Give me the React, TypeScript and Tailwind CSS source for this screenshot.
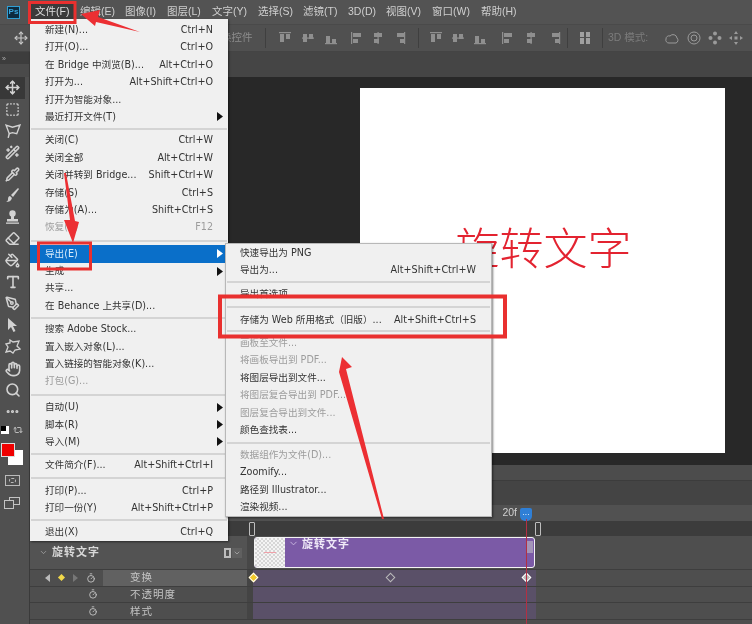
import React from 'react';
import { Move, SquareDashed, WandSparkles, Pipette, Eraser, PaintBucket, Type, PenTool, Hand, Search, Ellipsis, Repeat2, ChevronDown, Timer } from 'lucide-react';

const FONT = "font-['Liberation_Sans','Noto_Sans_CJK_SC',sans-serif]";
const MENUFONT = "font-['DejaVu_Sans','Noto_Sans_CJK_SC',sans-serif]";

type Row = { t: string; k?: string; off?: boolean; arrow?: boolean; hi?: boolean } | { sep: string };

const fileMenu: Row[] = [
  { t: '新建(N)...', k: 'Ctrl+N' },
  { t: '打开(O)...', k: 'Ctrl+O' },
  { t: '在 Bridge 中浏览(B)...', k: 'Alt+Ctrl+O' },
  { t: '打开为...', k: 'Alt+Shift+Ctrl+O' },
  { t: '打开为智能对象...' },
  { t: '最近打开文件(T)', arrow: true },
  { sep: 'my-[2px]' },
  { t: '关闭(C)', k: 'Ctrl+W' },
  { t: '关闭全部', k: 'Alt+Ctrl+W' },
  { t: '关闭并转到 Bridge...', k: 'Shift+Ctrl+W' },
  { t: '存储(S)', k: 'Ctrl+S' },
  { t: '存储为(A)...', k: 'Shift+Ctrl+S' },
  { t: '恢复(V)', k: 'F12', off: true },
  { sep: 'my-[3.5px]' },
  { t: '导出(E)', arrow: true, hi: true },
  { t: '生成', arrow: true },
  { t: '共享...' },
  { t: '在 Behance 上共享(D)...' },
  { sep: 'my-[2px]' },
  { t: '搜索 Adobe Stock...' },
  { t: '置入嵌入对象(L)...' },
  { t: '置入链接的智能对象(K)...' },
  { t: '打包(G)...', off: true },
  { sep: 'my-[3.2px]' },
  { t: '自动(U)', arrow: true },
  { t: '脚本(R)', arrow: true },
  { t: '导入(M)', arrow: true },
  { sep: 'my-[2px]' },
  { t: '文件简介(F)...', k: 'Alt+Shift+Ctrl+I' },
  { sep: 'my-[3px]' },
  { t: '打印(P)...', k: 'Ctrl+P' },
  { t: '打印一份(Y)', k: 'Alt+Shift+Ctrl+P' },
  { sep: 'my-[2.2px]' },
  { t: '退出(X)', k: 'Ctrl+Q' },
];

const exportMenu: Row[] = [
  { t: '快速导出为 PNG' },
  { t: '导出为...', k: 'Alt+Shift+Ctrl+W' },
  { sep: 'my-[2px]' },
  { t: '导出首选项...' },
  { sep: 'my-[3.2px]' },
  { t: '存储为 Web 所用格式（旧版）...', k: 'Alt+Shift+Ctrl+S' },
  { sep: 'my-[2px]' },
  { t: '画板至文件...', off: true },
  { t: '将画板导出到 PDF...', off: true },
  { t: '将图层导出到文件...' },
  { t: '将图层复合导出到 PDF...', off: true },
  { t: '图层复合导出到文件...', off: true },
  { t: '颜色查找表...' },
  { sep: 'my-[2.9px]' },
  { t: '数据组作为文件(D)...', off: true },
  { t: 'Zoomify...' },
  { t: '路径到 Illustrator...' },
  { t: '渲染视频...' },
];

function MenuRows({ rows, pl, pr }: { rows: Row[]; pl: string; pr: string }) {
  return (
    <>
      {rows.map((r, i) =>
        'sep' in r ? (
          <div key={i} className={`h-[2px] bg-[#d4d4d4] mx-[1px] ${r.sep}`} />
        ) : (
          <div
            key={i}
            className={`relative flex h-[17.4px] items-center justify-between whitespace-nowrap ${pl} ${pr} ${
              r.hi ? 'bg-[#0a6fc9] text-[#d8ecfa]' : r.off ? 'text-[#9c9c9c]' : 'text-[#333333]'
            }`}
          >
            <span>{r.t}</span>
            {r.k && <span>{r.k}</span>}
            {r.arrow && (
              <svg className="absolute right-[5px] top-[4px]" width="6" height="9" viewBox="0 0 6 9">
                <polygon points="0,0 6,4.5 0,9" fill={r.hi ? '#ffffff' : '#111111'} />
              </svg>
            )}
          </div>
        )
      )}
    </>
  );
}

const menuBar = [
  ['文件(F)', 'w-[44px] bg-[#3a3a3a] text-[#dddddd]'],
  ['编辑(E)', 'w-[45px] ml-[1px]'],
  ['图像(I)', 'w-[42px]'],
  ['图层(L)', 'w-[45px]'],
  ['文字(Y)', 'w-[46px]'],
  ['选择(S)', 'w-[45px]'],
  ['滤镜(T)', 'w-[45px]'],
  ['3D(D)', 'w-[38px]'],
  ['视图(V)', 'w-[46px]'],
  ['窗口(W)', 'w-[49px]'],
  ['帮助(H)', 'w-[46px]'],
];

function Bars({ v, flip }: { v?: boolean; flip?: number }) {
  const a = flip ?? 0;
  return (
    <svg width="14" height="14" viewBox="0 0 14 14" fill="#8f8f8f" className="shrink-0">
      {v ? (
        <>
          <rect x={a === 0 ? 1 : a === 1 ? 6.5 : 12} y="1" width="1.2" height="12" />
          <rect x={a === 2 ? 5 : 3} y="2" width="8" height="4" />
          <rect x={a === 2 ? 8 : 3} y="8" width="5" height="4" />
        </>
      ) : (
        <>
          <rect y={a === 0 ? 1 : a === 1 ? 6.5 : 12} x="1" height="1.2" width="12" />
          <rect y={a === 2 ? 5 : 3} x="2" height="8" width="4" />
          <rect y={a === 2 ? 8 : 3} x="8" height="5" width="4" />
        </>
      )}
    </svg>
  );
}

const Sep = ({ ml }: { ml: string }) => <div className={`h-[20px] w-px bg-[#3f3f3f] shrink-0 ${ml}`} />;

function OptionsBar() {
  return (
    <div className="flex h-[28px] shrink-0 items-center border-t border-b border-t-[#4a4a4a] border-b-[#444444] bg-[#505050] text-[10.5px] text-[#8c8c8c]">
      <Move size={14} className="ml-[14px] text-[#c8c8c8]" />
      <span className="ml-[193px] w-[30px] whitespace-nowrap">换控件</span>
      <Sep ml="ml-[14px]" />
      <div className="ml-[12px] flex gap-[9px]"><Bars flip={0} /><Bars flip={1} /><Bars flip={2} /></div>
      <div className="ml-[12px] flex gap-[7px]"><Bars v flip={0} /><Bars v flip={1} /><Bars v flip={2} /></div>
      <Sep ml="ml-[12px]" />
      <div className="ml-[10px] flex gap-[8px]"><Bars flip={0} /><Bars flip={1} /><Bars flip={2} /></div>
      <div className="ml-[14px] flex gap-[9px]"><Bars v flip={0} /><Bars v flip={1} /><Bars v flip={2} /></div>
      <Sep ml="ml-[6px]" />
      <svg width="12" height="12" viewBox="0 0 12 12" fill="#a0a0a0" className="ml-[11px]">
        <rect x="1" y="0" width="4" height="5" /><rect x="7" y="0" width="4" height="5" />
        <rect x="1" y="6" width="4" height="6" /><rect x="7" y="6" width="4" height="6" />
      </svg>
      <Sep ml="ml-[11px]" />
      <span className="ml-[5px] w-[44px] whitespace-nowrap text-[#7c7c7c]">3D 模式:</span>
      <div className="ml-[12px] flex items-center gap-[7px] text-[#9a9a9a]">
        <svg width="16" height="14" viewBox="0 0 16 14" fill="none" stroke="currentColor"><path d="M2 8a3 3 0 0 1 4-3 4 4 0 0 1 7 2 3 3 0 0 1-1 5H5a3 3 0 0 1-3-4z" /></svg>
        <svg width="14" height="14" viewBox="0 0 14 14" fill="none" stroke="currentColor"><circle cx="7" cy="7" r="6" /><circle cx="7" cy="7" r="3" /></svg>
        <svg width="14" height="14" viewBox="0 0 14 14" fill="currentColor"><circle cx="7" cy="2.5" r="2" /><circle cx="7" cy="11.5" r="2" /><circle cx="2.5" cy="7" r="2" /><circle cx="11.5" cy="7" r="2" /></svg>
        <svg width="14" height="14" viewBox="0 0 14 14" fill="currentColor"><path d="M7 0l2 3H5zM7 14l2-3H5zM0 7l3-2v4zM14 7l-3-2v4z" /><rect x="5.5" y="5.5" width="3" height="3" /></svg>
      </div>
    </div>
  );
}

const LassoIcon = () => (
  <svg width="16" height="16" viewBox="0 0 15 15" fill="none" stroke="currentColor" strokeWidth="1.3"><path d="M1 2l6 2 7-2-3 8-4-1-3 1z" /><path d="M4 10l-1 4" /></svg>
);
const ArrowIcon = () => (
  <svg width="15" height="15" viewBox="0 0 15 15" fill="currentColor"><path d="M3 0l9 8H8l2.5 5-2 1-2.5-5-3 3z" /></svg>
);
const BlobIcon = () => (
  <svg width="16" height="15" viewBox="0 0 16 15" fill="none" stroke="currentColor" strokeWidth="1.3"><path d="M5 1l3 2 6-1-2 5 3 3-5 1-2 3-3-2-4 1 2-5-2-3 4-1z" /></svg>
);
const BrushIcon = () => (
  <svg width="15" height="15" viewBox="0 0 15 15" fill="currentColor"><path d="M13 0l1 1-6 8-2-2z" /><path d="M5 8l2 2c-1 3-3 4-6 4 2-1 2-2 2-3 0-2 1-3 2-3z" /></svg>
);
const StampIcon = () => (
  <svg width="15" height="15" viewBox="0 0 15 15" fill="currentColor"><circle cx="7.5" cy="3.5" r="3.2" /><rect x="6" y="6" width="3" height="3" /><rect x="2" y="9" width="11" height="2.5" /><rect x="1" y="12.5" width="13" height="1.3" /></svg>
);

const tools: React.ReactNode[] = [
  <Move size={15} strokeWidth={2.4} />, <SquareDashed size={15} strokeWidth={2.2} />, <LassoIcon />, <WandSparkles size={15} strokeWidth={2.4} />, <Pipette size={15} strokeWidth={2.4} />,
  <BrushIcon />, <StampIcon />, <Eraser size={15} strokeWidth={2.4} />, <PaintBucket size={15} strokeWidth={2.4} />, <Type size={16} strokeWidth={2.4} />,
  <PenTool size={15} strokeWidth={2.4} />, <ArrowIcon />, <BlobIcon />, <Hand size={16} strokeWidth={2.4} />, <Search size={16} strokeWidth={2.4} />, <Ellipsis size={15} strokeWidth={3} />,
];

function Toolbar() {
  return (
    <div className="flex w-[30px] shrink-0 flex-col border-r border-r-[#3a3a3a] bg-[#505050] text-[#d2d2d2]">
      <div className="flex h-[12px] items-center bg-[#3d3d3d] pl-[2px] text-[7px] leading-none text-[#b0b0b0]">»</div>
      <div className="h-[13px] bg-[#4a4a4a]" />
      {tools.map((ic, i) => (
        <div key={i} className={`flex h-[21.6px] w-[25px] shrink-0 items-center justify-center ${i === 0 ? 'bg-[#383838]' : ''}`}>
          {ic}
        </div>
      ))}
      <div className="flex h-[15px] shrink-0 items-center justify-between pl-[1px] pr-[6px]">
        <div className="relative h-[8px] w-[8px] bg-white"><div className="h-[5px] w-[5px] bg-black" /></div>
        <Repeat2 size={10} />
      </div>
      <div className="relative mt-[5px] h-[23px] shrink-0">
        <div className="absolute left-[8px] top-[7px] h-[15px] w-[15px] bg-white" />
        <div className="absolute left-[1px] top-0 h-[14px] w-[14px] border border-[#dddddd] bg-[#f00000]" />
      </div>
      <div className="mt-[8px] flex h-[14px] shrink-0 items-center justify-center pr-[5px]">
        <div className="flex h-[11px] w-[15px] items-center justify-center border border-[#bbbbbb]"><div className="h-[5px] w-[7px] rounded-full border border-dashed border-[#bbbbbb]" /></div>
      </div>
      <div className="mt-[7px] flex h-[16px] shrink-0 items-center justify-center pr-[5px]">
        <svg width="16" height="12" viewBox="0 0 16 12" fill="none" stroke="#c4c4c4"><rect x="5.5" y="0.5" width="10" height="7" /><rect x="0.5" y="3.5" width="9" height="8" fill="#505050" /></svg>
      </div>
      <div className="flex-1 bg-[#505050]" />
    </div>
  );
}

function Diamond({ cls }: { cls: string }) {
  return <div className={`h-[7px] w-[7px] shrink-0 rotate-45 ${cls}`} />;
}

function TimelineRow({ label, active }: { label: string; active?: boolean }) {
  return (
    <div className="flex h-[16.6px] shrink-0 items-center border-b border-b-[#3e3e3e] text-[10.5px] text-[#c4c4c4]">
      <div className="flex h-full w-[73px] shrink-0 items-center">
        {active ? (
          <>
            <div className="ml-[15px] h-0 w-0 border-y-[4px] border-r-[5px] border-y-transparent border-r-[#bbbbbb]" />
            <div className="ml-[9px] h-[5px] w-[5px] rotate-45 bg-[#f2d94a]" />
            <div className="ml-[9px] h-0 w-0 border-y-[4px] border-l-[5px] border-y-transparent border-l-[#777777]" />
            <Timer size={10} className="ml-[8px] text-[#cccccc]" />
          </>
        ) : (
          <Timer size={10} className="ml-[58px] text-[#cccccc]" />
        )}
      </div>
      <div className={`flex h-full w-[144px] items-center pl-[27px] pt-[1px] tracking-[1px] ${active ? 'bg-[#616161]' : ''}`}>{label}</div>
      <div className="h-full w-[6px] bg-[#444444]" />
      <div className="relative flex h-full w-[283px] items-center bg-[#5a5068]">
        {active && (
          <div className="flex w-full items-center justify-between">
            <Diamond cls="-ml-[3px] border border-white bg-[#f2c92a]" />
            <Diamond cls="border border-[#bbbbbb]" />
            <Diamond cls="mr-[6px] border border-white bg-[#b9b9b9]" />
          </div>
        )}
      </div>
    </div>
  );
}

function Timeline() {
  return (
    <div className="flex min-h-0 flex-1 flex-col overflow-hidden bg-[#4e4e4e]">
      <div className="h-[15px] shrink-0 bg-[#4c4c4c]" />
      <div className="h-[25px] shrink-0 border-t border-t-[#3c3c3c] bg-[#444444]" />
      <div className="flex h-[16px] shrink-0 items-center justify-end bg-[#515151] pr-[220px] text-[10.5px] text-[#d0d0d0]">
        <span>20f</span>
        <div className="ml-[3px] mt-[3px] flex h-[13px] w-[12px] items-center justify-center rounded-b-[5px] rounded-t-[2px] bg-[#2f7fd6] text-[7px] leading-none text-white">···</div>
      </div>
      <div className="flex h-[15px] shrink-0 items-center bg-[#3c3c3c]">
        <div className="ml-[219px] h-[14px] w-[6px] rounded-[1px] border border-[#bdbdbd]" />
        <div className="ml-[280px] h-[14px] w-[6px] rounded-[1px] border border-[#bdbdbd]" />
      </div>
      <div className="flex h-[34px] shrink-0 items-center border-b border-b-[#3e3e3e]">
        <div className="flex h-full w-[217px] shrink-0 items-center bg-[#535353] pl-[9px] text-[11px] font-bold tracking-[1px] text-[#d8d8d8]">
          <ChevronDown size={9} className="text-[#a8a8a8]" />
          <span className="ml-[4px]">旋转文字</span>
          <div className="ml-auto mr-[5px] flex items-center">
            <div className="h-[10px] w-[7px] border-2 border-[#bdbdbd]" />
            <div className="ml-[1px] flex h-[10px] w-[10px] items-center justify-center bg-[#606060]"><ChevronDown size={8} className="text-[#bbbbbb]" /></div>
          </div>
        </div>
        <div className="h-full w-[7px] bg-[#474747]" />
        <div className="flex h-[31px] w-[281px] overflow-hidden rounded-[3px] border border-[#f4f4f4] bg-[#7b5aa6]">
          <div className="flex h-full w-[30px] shrink-0 items-center justify-center bg-[repeating-conic-gradient(#d6d6d6_0_25%,#f4f4f4_0_50%)] bg-[length:4px_4px]">
            <div className="h-px w-[12px] bg-[#f0a0a8]" />
          </div>
          <ChevronDown size={11} className="ml-[3px] text-[#c9b8e0]" />
          <span className="ml-[3px] -mt-[1px] h-[14px] text-[11px] font-bold leading-[14px] tracking-[1px] text-[#f0eaf8]">旋转文字</span>
          <div className="ml-auto mr-[1px] mt-[3px] h-[12px] w-[7px] bg-[#a395b8]" />
        </div>
      </div>
      <TimelineRow label="变换" active />
      <TimelineRow label="不透明度" />
      <TimelineRow label="样式" />
    </div>
  );
}

export default function App() {
  return (
    <div className={`relative flex h-[624px] w-[752px] flex-col overflow-hidden bg-[#4e4e4e] blur-[0.35px] ${FONT}`}>
      <div className="flex h-[24px] shrink-0 items-center bg-[#535353] text-[10.5px] text-[#cfcfcf]">
        <div className="flex h-[24px] w-[31px] items-center pl-[7px]">
          <div className="flex h-[13px] w-[13px] items-center justify-center border border-[#2f9fd4] bg-[#0d2b3f] text-[8px] font-bold leading-none text-[#39a8e0]">Ps</div>
        </div>
        {menuBar.map(([t, c]) => (
          <div key={t} className={`flex h-[22px] items-center whitespace-nowrap pl-[4px] ${c}`}>{t}</div>
        ))}
      </div>
      <OptionsBar />
      <div className="flex min-h-0 flex-1">
        <Toolbar />
        <div className="flex min-w-0 flex-1 flex-col">
          <div className="h-[25px] shrink-0 bg-[#454545]" />
          <div className="h-[388px] shrink-0 bg-[#282828] pl-[330px] pt-[11px]">
            <div className="flex h-[365px] w-[365px] items-start justify-center bg-white pl-[2px] pt-[134px]">
              <span className="text-[44px] font-light leading-[56px] text-[#e32330]">旋转文字</span>
            </div>
          </div>
          <Timeline />
        </div>
      </div>

      {/* 文件 menu */}
      <div className={`absolute left-[30px] top-[19px] w-[198px] bg-[#f0f0f0] pt-[2.5px] text-[9.6px] shadow-[1px_1px_2px_rgba(0,0,0,0.5)] ${MENUFONT}`}>
        <MenuRows rows={fileMenu} pl="pl-[15px]" pr="pr-[15px]" />
      </div>
      {/* 导出 submenu */}
      <div className={`absolute left-[225px] top-[243px] w-[267px] border border-[#b8b8b8] bg-[#f0f0f0] pt-[0.5px] text-[9.6px] shadow-[1px_1px_2px_rgba(0,0,0,0.5)] ${MENUFONT}`}>
        <MenuRows rows={exportMenu} pl="pl-[14px]" pr="pr-[15px]" />
      </div>

      {/* playhead */}
      <div className="absolute left-[525.5px] top-[519px] h-[105px] w-[1.5px] bg-[#b23043]" />

      {/* annotations */}
      <svg className="pointer-events-none absolute left-0 top-0" width="752" height="624" viewBox="0 0 752 624">
        <g fill="none" stroke="#e9302f">
          <rect x="29.5" y="2.5" width="45.5" height="20" strokeWidth="3" />
          <rect x="38.5" y="243" width="52" height="26" strokeWidth="3" />
          <rect x="220" y="296.5" width="285" height="40" strokeWidth="4" />
        </g>
        <g fill="#ec2f33">
          <polygon points="81,14 100,10 98,17 140,32 96,22 95,26" />
          <polygon points="64,173 66,173 75,221 79,222 73,243 64,220 70,220" />
          <polygon points="342,357 352,367 346,369 384,519 382,519 339,372" />
        </g>
      </svg>
    </div>
  );
}
